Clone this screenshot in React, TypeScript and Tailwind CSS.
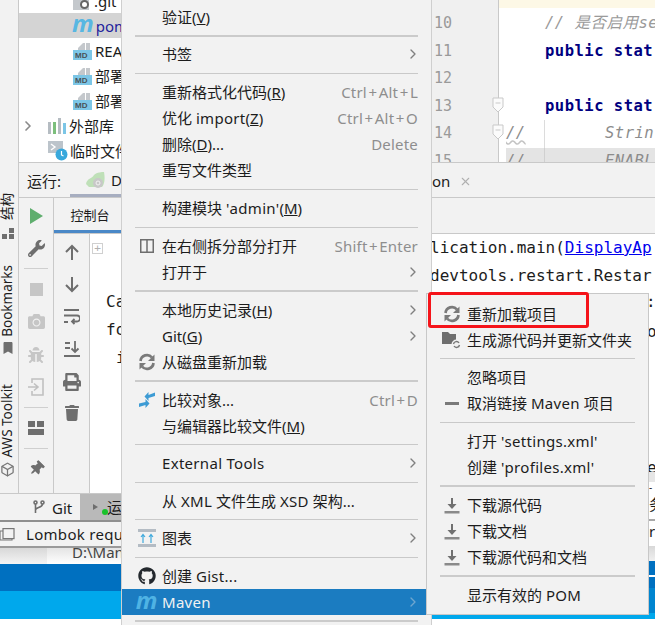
import React from 'react'
import { FaBookmark, FaBug, FaCamera, FaGithub, FaPrint, FaThumbtack, FaTrash, FaWrench } from 'react-icons/fa'
import { Box, ChevronRight, X } from 'lucide-react'

const ui = 'font-["Noto_Sans","Noto_Sans_CJK_SC",sans-serif]'
const mono = 'font-["DejaVu_Sans_Mono","Noto_Sans_CJK_SC",monospace]'

function MavenLogo({ className }: { className?: string }) {
  return <span className={`font-["Noto_Sans",sans-serif] font-bold italic leading-none text-[24px] ${className}`}>m</span>
}

// latin bits of the menu run a little wider than the font here
function L({ children }: { children: React.ReactNode }) {
  return <span className="tracking-[0.3px]">{children}</span>
}

function MdIcon() {
  return (
    <svg width="19" height="19" viewBox="0 0 19 19" className="shrink-0">
      <path d="M5 7 L10 2 H12 V9 H5Z" fill="#c4c8cc" />
      <path d="M13 2 H17 V9 H13Z" fill="#c4c8cc" />
      <rect x="0" y="9" width="19" height="10" fill="#7cc6e6" />
      <text x="2" y="17" fontSize="8" fontWeight="700" fill="#4a5258" fontFamily="Liberation Sans">MD</text>
    </svg>
  )
}

function ReloadIcon() {
  return (
    <svg width="18" height="18" viewBox="0 0 18 18" fill="none" stroke="#7a7a7a" strokeWidth="2.7">
      <path d="M2.5 8 A6.5 6.5 0 0 1 14 4.5" />
      <path d="M15.5 10 A6.5 6.5 0 0 1 4 13.5" />
      <path d="M16.5 1.5 V8 H10Z" fill="#7a7a7a" stroke="none" />
      <path d="M1.5 16.5 V10 H8Z" fill="#7a7a7a" stroke="none" />
    </svg>
  )
}

function DownloadIcon() {
  return (
    <svg width="16" height="17" viewBox="0 0 16 17" fill="none">
      <path d="M8 1 V10" stroke="#707070" strokeWidth="2" />
      <path d="M3.5 7 H12.5 L8 12Z" fill="#707070" />
      <rect x="0.5" y="14" width="15" height="2.5" fill="#8a8a8a" />
    </svg>
  )
}

function GenerateIcon() {
  return (
    <svg width="20" height="19" viewBox="0 0 20 19" fill="none">
      <path d="M0 1 H6 L8 3 H14 V13 H0Z" fill="#6e6e6e" />
      <circle cx="14.5" cy="13.5" r="5" fill="#f2f2f2" />
      <path d="M11.5 13 A3 3 0 0 1 17 12 M17.5 14 A3 3 0 0 1 12 15" stroke="#777" strokeWidth="1.4" />
    </svg>
  )
}

function SplitIcon() {
  return (
    <svg width="14" height="14" viewBox="0 0 14 14" fill="none" stroke="#6e6e6e" strokeWidth="1.5">
      <rect x="0.75" y="0.75" width="12.5" height="12.5" />
      <path d="M7 1 V13" />
    </svg>
  )
}

function CompareIcon() {
  return (
    <svg width="18" height="18" viewBox="0 0 18 18" fill="#3d9bd4">
      <path d="M10.5 1 V4 L17 1.5 V5 L10.5 7 V10 L6.5 5.5Z" />
      <path d="M7.5 8 V11 L1 12.5 V16 L7.5 14 V17 L11.5 12.5Z" />
    </svg>
  )
}

function DiagramIcon() {
  return (
    <svg width="18" height="18" viewBox="0 0 18 18" fill="none">
      <rect x="0" y="0" width="18" height="3" fill="#b4bcc4" />
      <rect x="0" y="15" width="18" height="3" fill="#b4bcc4" />
      <path d="M5 14 V6 M3 8 L5 5.5 L7 8 M13 14 V6 M11 8 L13 5.5 L15 8" stroke="#3fa9dc" strokeWidth="1.2" />
    </svg>
  )
}

// the + signs in the shortcuts sit wider apart than in this font
function Hint({ text }: { text: string }) {
  const parts = text.split('+')
  return (
    <span className="tracking-[0.2px] text-[#8e8e8e]">
      {parts.map((p, i) => (
        <React.Fragment key={p}>
          {i > 0 && <span className="px-[1.5px]">+</span>}
          {p}
        </React.Fragment>
      ))}
    </span>
  )
}

type Row = {
  label: React.ReactNode
  hint?: string
  arrow?: boolean
  icon?: React.ReactNode
  active?: boolean
}

function MenuRow({ label, hint, arrow, icon, active }: Row) {
  return (
    <div className={`flex h-[26px] items-center pr-[13px] text-[15px] ${active ? 'bg-[#1b7cc1] text-[#f2f2f2]' : 'text-[#1c1c1c]'}`}>
      <div className="flex w-[40px] shrink-0 items-center justify-center pl-[9px]">{icon}</div>
      <div className="flex-1 whitespace-nowrap">{label}</div>
      {hint && <Hint text={hint} />}
      {arrow && <ChevronRight size={16} strokeWidth={2} className={`-mr-[3px] ${active ? 'text-[#6ea6cf]' : 'text-[#808080]'}`} />}
    </div>
  )
}

function Sep({ h = 'h-[12px]', thick }: { h?: string; thick?: boolean }) {
  return (
    <div className={`flex ${h} items-center px-[13px]`}>
      <div className={`w-full ${thick ? 'h-[2px] bg-[#cbcbcb]' : 'h-px bg-[#c9c9c9]'}`} />
    </div>
  )
}

function ContextMenu() {
  return (
    <div className={`absolute left-[121px] top-0 h-[625px] w-[311px] border-x border-[#cfcfcf] bg-[#f2f2f2] pt-[4px] ${ui}`}>
      <MenuRow label={<>验证(<u>V</u>)</>} />
      <Sep h="h-[11px]" thick />
      <MenuRow label="书签" arrow />
      <Sep />
      <MenuRow label={<>重新格式化代码(<u>R</u>)</>} hint="Ctrl+Alt+L" />
      <MenuRow label={<>优化 <L>import</L>(<u>Z</u>)</>} hint="Ctrl+Alt+O" />
      <MenuRow label={<>删除(<u>D</u>)...</>} hint="Delete" />
      <MenuRow label="重写文件类型" />
      <Sep />
      <MenuRow label={<>构建模块 <L>'admin'</L>(<u>M</u>)</>} />
      <Sep />
      <MenuRow label="在右侧拆分部分打开" hint="Shift+Enter" icon={<SplitIcon />} />
      <MenuRow label="打开于" arrow />
      <Sep thick />
      <MenuRow label={<>本地历史记录(<u>H</u>)</>} arrow />
      <MenuRow label={<>Git(<u>G</u>)</>} arrow />
      <MenuRow label="从磁盘重新加载" icon={<ReloadIcon />} />
      <Sep thick />
      <MenuRow label="比较对象..." hint="Ctrl+D" icon={<CompareIcon />} />
      <MenuRow label={<>与编辑器比较文件(<u>M</u>)</>} />
      <Sep h="h-[11px]" />
      <MenuRow label={<L>External Tools</L>} arrow />
      <Sep />
      <MenuRow label={<>从 <L>XML</L> 文件生成 <L>XSD</L> 架构...</>} />
      <Sep h="h-[11px]" />
      <MenuRow label="图表" arrow icon={<DiagramIcon />} />
      <Sep />
      <MenuRow label={<>创建 <L>Gist...</L></>} icon={<FaGithub size={18} className="text-[#24292e]" />} />
      <MenuRow label={<L>Maven</L>} arrow active icon={<MavenLogo className="-mt-[5px] text-[#4fb3e4]" />} />
      <Sep thick />
    </div>
  )
}

function SubMenu() {
  return (
    <div className={`absolute left-[426px] top-[293px] h-[322px] w-[223px] border border-[#c8c8c8] bg-[#f2f2f2] pt-[7px] ${ui}`}>
      <MenuRow label="重新加载项目" icon={<ReloadIcon />} />
      <MenuRow label="生成源代码并更新文件夹" icon={<GenerateIcon />} />
      <Sep h="h-[11px]" />
      <MenuRow label="忽略项目" />
      <MenuRow label={<>取消链接 <L>Maven</L> 项目</>} icon={<div className="h-[3px] w-[14px] bg-[#7a7a7a]" />} />
      <Sep />
      <MenuRow label={<>打开 <L>'settings.xml'</L></>} />
      <MenuRow label={<>创建 <L>'profiles.xml'</L></>} />
      <Sep thick />
      <MenuRow label="下载源代码" icon={<DownloadIcon />} />
      <MenuRow label="下载文档" icon={<DownloadIcon />} />
      <MenuRow label="下载源代码和文档" icon={<DownloadIcon />} />
      <Sep thick />
      <MenuRow label={<>显示有效的 <L>POM</L></>} />
    </div>
  )
}

function TreeRow({ icon, children, selected, chevron }: { icon: React.ReactNode; children: React.ReactNode; selected?: boolean; chevron?: boolean }) {
  return (
    <div className={`flex h-[25px] shrink-0 items-center whitespace-nowrap ${selected ? 'bg-[#d4d4d4]' : ''}`}>
      {chevron && <ChevronRight size={16} strokeWidth={2.5} className="ml-[1px] mr-[12px] text-[#8a8a8a]" />}
      {icon}
      <span>{children}</span>
    </div>
  )
}

function ProjectTree() {
  return (
    <div className={`flex h-[163px] w-[103px] shrink-0 flex-col overflow-hidden border-b border-[#c9c9c9] bg-white text-[15px] leading-[22px] text-[#1c1c1c] ${ui}`}>
      <div className="-mt-[12px]" />
      <TreeRow icon={<div className="ml-[54px] mr-[5px] h-[19px] w-[16px] shrink-0 bg-[#c4c8cc]"><div className="ml-[7px] mt-[9px] h-[9px] w-[9px] rounded-full border-2 border-[#666] bg-white" /></div>}>.git</TreeRow>
      <TreeRow selected icon={<MavenLogo className="-mt-[5px] ml-[53px] mr-[2px] text-[#58b7e2]" />}><span className="pt-[1px] text-[#1f1f9c]">pom</span></TreeRow>
      <TreeRow icon={<span className="ml-[54px] mr-[3px] flex"><MdIcon /></span>}>README</TreeRow>
      <TreeRow icon={<span className="ml-[54px] mr-[3px] flex"><MdIcon /></span>}>部署文档</TreeRow>
      <TreeRow icon={<span className="ml-[54px] mr-[3px] flex"><MdIcon /></span>}>部署说明</TreeRow>
      <TreeRow
        chevron
        icon={
          <svg width="18" height="16" viewBox="0 0 18 16" className="mr-[3px] shrink-0">
            <rect x="0" y="4" width="3" height="12" fill="#b5bcc2" />
            <rect x="5" y="4" width="3" height="12" fill="#7cbf7c" />
            <rect x="10" y="0" width="3" height="16" fill="#b5bcc2" />
            <rect x="15" y="5" width="3" height="11" fill="#7cc6e6" />
          </svg>
        }
      >
        外部库
      </TreeRow>
      <TreeRow
        icon={
          <svg width="20" height="20" viewBox="0 0 20 20" className="ml-[29px] mr-[2px] shrink-0">
            <rect x="0" y="0" width="15" height="12" fill="#bcc4cb" />
            <path d="M3 3 L7 6 L3 9" stroke="#fff" strokeWidth="1.4" fill="none" />
            <circle cx="13.5" cy="13.5" r="6" fill="#38a8dc" />
            <path d="M13.5 10 V14 L15.5 15" stroke="#fff" strokeWidth="1.2" fill="none" />
          </svg>
        }
      >
        临时文件
      </TreeRow>
    </div>
  )
}

function FoldMark() {
  return (
    <svg width="12" height="16" viewBox="0 0 12 16" fill="#fbfbfb" stroke="#c9c9c9">
      <path d="M1 1 H11 V10 L6 15 L1 10Z" />
      <path d="M3.5 6 H8.5" />
    </svg>
  )
}

function Editor() {
  return (
    <div className={`flex h-[163px] flex-1 overflow-hidden border-b border-[#c9c9c9] ${mono}`}>
      <div className="w-[67px] shrink-0 border-r border-[#c9c9c9] bg-[#f0f0f0] pl-[2px] pt-[10px] text-[15px] leading-[27.6px] text-[#9a9a9a]">
        <div>10</div>
        <div>11</div>
        <div>12</div>
        <div className="relative">13<span className="absolute left-[58px] top-[4px]"><FoldMark /></span></div>
        <div className="relative">14<span className="absolute left-[58px] top-[4px]"><FoldMark /></span></div>
        <div>15</div>
      </div>
      <div className="flex-1 overflow-hidden whitespace-nowrap bg-white">
        <div className="h-[8px] bg-[#fdf8e6]" />
        <div className="pl-[46px] pt-[2px] text-[15.5px] leading-[27.6px] tracking-[0.5px]">
          <div className="italic text-[#9a9a9a]">// 是否启用se</div>
          <div className="font-bold text-[#000080]">public stat</div>
          <div>&nbsp;</div>
          <div className="font-bold text-[#000080]">public stat</div>
        </div>
        <div className="flex text-[15.5px] italic leading-[27.6px] tracking-[0.5px] text-[#8c8c8c]">
          <span className="ml-[7px] w-[38px] shrink-0 underline decoration-[#c4c4c4] decoration-wavy">//</span>
          <span className="border-l border-[#dcdcdc] pl-[60px]">Strin</span>
        </div>
        <div className="ml-[7px] flex bg-[#e4e4e4] text-[15.5px] italic leading-[27.6px] tracking-[0.5px] text-[#8c8c8c]">
          <span className="w-[38px] shrink-0">//</span>
          <span className="border-l border-[#d0d0d0] pl-[60px]">ENABL</span>
        </div>
      </div>
    </div>
  )
}

function RunPanel() {
  const grey = 'text-[#6e6e6e]'
  const dim = 'text-[#c6c6c6]'
  return (
    <div className="flex h-[330px] shrink-0">
      {/* stripe on the left edge */}
      <div className={`flex w-[19px] shrink-0 flex-col items-center overflow-hidden border-r border-[#c9c9c9] bg-[#f2f2f2] pr-[3px] pt-[30px] text-[13.5px] text-[#1c1c1c] ${ui}`}>
        <span className="rotate-180 leading-none [text-orientation:sideways] [writing-mode:vertical-rl]">结构</span>
        <svg width="12" height="12" viewBox="0 0 12 12" fill="#6e6e6e" className="mt-[8px] shrink-0"><rect x="7" y="0" width="5" height="5" /><rect x="0" y="6" width="5" height="5" /><rect x="7" y="6" width="5" height="5" /></svg>
        <span className="mt-[25px] rotate-180 leading-none [writing-mode:vertical-rl]">Bookmarks</span>
        <FaBookmark size={12} className={`mt-[5px] shrink-0 ${grey}`} />
        <span className="mt-[30px] rotate-180 leading-none [writing-mode:vertical-rl]">AWS Toolkit</span>
        <Box size={15} className="mt-[5px] shrink-0 text-[#777]" />
      </div>
      <div className="flex min-w-0 flex-1 flex-col">
        {/* run header */}
        <div className={`flex h-[34px] shrink-0 items-center overflow-hidden bg-[#f2f2f2] pl-[8px] text-[15px] text-[#1c1c1c] ${ui}`}>
          <span className="w-[43px] pt-[2px]">运行:</span>
          <span className="flex h-full w-[52px] shrink-0 items-center border-b-[3px] border-[#a7aec0] pl-[16px] pt-[3px]">
            <svg width="20" height="17" viewBox="0 0 20 17" className="mr-[5px] shrink-0">
              <path d="M0 12 C1 6 6 7 8 3 C11 0 16 0 18 0 C19 5 19 12 16 15 H3Z" fill="#bfe0b8" />
              <circle cx="12" cy="11" r="5" fill="#c8c8c8" />
              <circle cx="12" cy="11" r="2" fill="none" stroke="#f2f2f2" />
            </svg>
            D
          </span>
          <div className="w-[310px] shrink-0" />
          <span className="flex items-center pt-[2px]">on<X size={13} className="ml-[9px] text-[#b0b0b0]" /></span>
        </div>
        <div className="flex min-h-0 flex-1 border-t border-[#c9c9c9]">
          {/* run actions */}
          <div className="flex w-[35px] shrink-0 flex-col items-center border-r border-[#c9c9c9] bg-[#f2f2f2] pt-[10px]">
            <svg width="14" height="16" viewBox="0 0 14 16" fill="#5fae6e"><path d="M1 0 L14 8 L1 16Z" /></svg>
            <FaWrench size={17} className={`mt-[16px] ${grey}`} />
            <div className="mt-[11px] h-px w-[24px] bg-[#cfcfcf]" />
            <div className="mt-[14px] h-[13px] w-[13px] bg-[#c6c6c6]" />
            <FaCamera size={17} className={`mt-[17px] ${dim}`} />
            <FaBug size={16} className={`mt-[17px] ${dim}`} />
            <svg width="16" height="18" viewBox="0 0 16 18" fill="none" stroke="#c0c0c0" strokeWidth="1.6" className="mt-[15px]"><path d="M4 5 V1 H15 V17 H4 V13" /><path d="M0 9 H9 M6 5.5 L10 9 L6 12.5" /></svg>
            <div className="mt-[11px] h-px w-[24px] bg-[#cfcfcf]" />
            <svg width="16" height="14" viewBox="0 0 16 14" fill="#6e6e6e" className="mt-[13px]"><rect x="0" y="0" width="7" height="6" /><rect x="9" y="0" width="7" height="6" /><rect x="0" y="8" width="16" height="6" /></svg>
            <div className="mt-[13px] h-px w-[24px] bg-[#cfcfcf]" />
            <FaThumbtack size={15} className={`mt-[12px] rotate-45 ${grey}`} />
          </div>
          <div className="flex min-w-0 flex-1 flex-col">
            {/* console tab row */}
            <div className={`flex h-[36px] shrink-0 border-b border-[#c9c9c9] bg-[#f2f2f2] text-[13px] text-[#1c1c1c] ${ui}`}>
              <div className="flex w-[68px] items-center justify-center border-b-[3px] border-[#4a88c7] pl-[4px] pt-[3px]">控制台</div>
            </div>
            <div className="flex min-h-0 flex-1">
              <div className="flex w-[36px] shrink-0 flex-col items-center border-r border-[#c9c9c9] bg-[#f2f2f2] pt-[10px]">
                <svg width="14" height="16" viewBox="0 0 14 16" fill="none" stroke="#6e6e6e" strokeWidth="2"><path d="M7 16 V2 M1 8 L7 2 L13 8" /></svg>
                <svg width="14" height="16" viewBox="0 0 14 16" fill="none" stroke="#6e6e6e" strokeWidth="2" className="mt-[17px]"><path d="M7 0 V14 M1 8 L7 14 L13 8" /></svg>
                <svg width="16" height="16" viewBox="0 0 16 16" fill="none" stroke="#6e6e6e" strokeWidth="1.8" className="mt-[16px]"><path d="M0 1 H15 M0 6.5 H13 A3 3 0 0 1 13 12.5 H8 M10.5 10 L8 12.5 L10.5 15 M0 13 H4" /></svg>
                <svg width="16" height="16" viewBox="0 0 16 16" fill="none" stroke="#6e6e6e" strokeWidth="1.8" className="mt-[16px]"><path d="M0 15 H16 M1 2 H6 M1 7 H6 M11 0 V11 M7.5 7.5 L11 11 L14.5 7.5" /></svg>
                <FaPrint size={18} className={`mt-[16px] ${grey}`} />
                <FaTrash size={16} className={`mt-[14px] ${grey}`} />
              </div>
              <div className={`relative flex-1 overflow-hidden bg-white pl-[16px] text-[16px] leading-[28px] text-[#1c1c1c] ${mono}`}>
                <div className="ml-[-14px] mt-[9px] flex h-[11px] w-[11px] items-center justify-center border border-[#d0d0d0] text-[11px] leading-none text-[#b0b0b0]">+</div>
                <div className="mt-[34px]">Ca</div>
                <div>fo</div>
                <div className="pl-[10px]">i</div>
                {/* console output that shows to the right of the popup menus */}
                <div className="absolute left-[340px] top-0 whitespace-nowrap">
                  <div>lication.main(<span className="text-[#0000ee] underline">DisplayAp</span></div>
                  <div>devtools.restart.Restar</div>
                  <div className="absolute left-[216px] top-[54px]">:</div>
                  <div className="absolute left-[217px] top-[84px]">o</div>
                  <div className="absolute left-[217px] top-[220px]">e</div>
                </div>
              </div>
            </div>
          </div>
        </div>
      </div>
    </div>
  )
}

function BottomBars() {
  return (
    <div className={`flex flex-1 flex-col text-[15px] text-[#1c1c1c] ${ui}`}>
      {/* tool window bar */}
      <div className="flex h-[27px] shrink-0 items-center border-t border-[#c9c9c9] bg-[#f2f2f2]">
        <svg width="12" height="15" viewBox="0 0 12 15" fill="none" stroke="#6e6e6e" strokeWidth="1.6" className="ml-[33px]"><circle cx="2.5" cy="2.5" r="1.5" /><circle cx="9.5" cy="2.5" r="1.5" /><path d="M2.5 4 V13 M9.5 4 C9.5 8 2.5 7 2.5 10" /></svg>
        <span className="ml-[7px] w-[28px] pt-[2px]">Git</span>
        <div className="relative flex h-full w-[42px] items-center bg-[#b9b9b9] pl-[13px]">
          <svg width="10" height="12" viewBox="0 0 10 12" fill="#6e6e6e"><path d="M0 0 L10 6 L0 12Z" /></svg>
          <span className="absolute left-[22px] top-[15px] h-[6px] w-[6px] rounded-full bg-[#19c22b]" />
          <span className="ml-[9px] whitespace-nowrap">运</span>
        </div>
      </div>
      {/* notification */}
      <div className="flex h-[28px] shrink-0 items-center whitespace-nowrap border-y-2 border-b-[#9a9a9a] border-t-[#8f8f8f] bg-[#f2f2f2]">
        <svg width="15" height="13" viewBox="0 0 15 13" fill="none" stroke="#777" strokeWidth="1.2"><rect x="3" y="0.6" width="11" height="10" /><path d="M3 3 H0 V12 H12 V10.6" /></svg>
        <span className="ml-[11px] tracking-[0.3px]">Lombok requ</span>
      </div>
      <div className="flex h-[16px] shrink-0 overflow-hidden whitespace-nowrap">
        <div className="w-[47px] bg-gradient-to-b from-[#d8d8d8] to-[#f4f4f4]" />
        <div className="flex-1 bg-gradient-to-b from-[#e4e4e4] to-white pl-[25px] text-[15px] leading-[8px] text-[#444]">D:\Man</div>
      </div>
      <div className="h-[27px] shrink-0 bg-[#0070c0]" />
      <div className="h-[28px] shrink-0 bg-[#00a8ec]" />
      <div className="flex-1 bg-white" />
    </div>
  )
}

function RightSliver() {
  return (
    <div className={`absolute left-[649px] top-[472px] flex w-[6px] flex-col overflow-hidden text-[15px] leading-none text-[#1c1c1c] ${ui}`}>
      <div className="h-[10px] bg-[#e6e6e6]" />
      <div className="h-[10px] bg-white text-[10px]">-</div>
      <div className="h-[27px] whitespace-nowrap bg-white pt-[5px]">务</div>
      <div className="h-[2px] bg-[#a8a8a8]" />
      <div className="h-[25px] whitespace-nowrap bg-white pt-[3px]">r</div>
      <div className="h-[15px] bg-gradient-to-b from-[#d8d8d8] to-[#f0f0f0]" />
      <div className="h-[27px] bg-[#0070c0] pt-[14px]"><div className="h-[2px] bg-white" /></div>
      <div className="h-[25px] bg-[#0085d0]" />
    </div>
  )
}

export default function App() {
  return (
    <div className="relative flex h-[625px] w-[655px] flex-col overflow-hidden bg-white">
      <div className="flex h-[163px] shrink-0">
        <div className="w-[19px] shrink-0 border-r border-[#c9c9c9] bg-[#f2f2f2]" />
        <ProjectTree />
        <div className="w-[310px] shrink-0" />
        <Editor />
      </div>
      <RunPanel />
      <BottomBars />
      <RightSliver />
      <ContextMenu />
      <SubMenu />
      {/* red annotation drawn over the screenshot */}
      <div className="absolute left-[428px] top-[292px] h-[36px] w-[161px] rounded-[3px] border-[3px] border-[#f5141a]" />
    </div>
  )
}
